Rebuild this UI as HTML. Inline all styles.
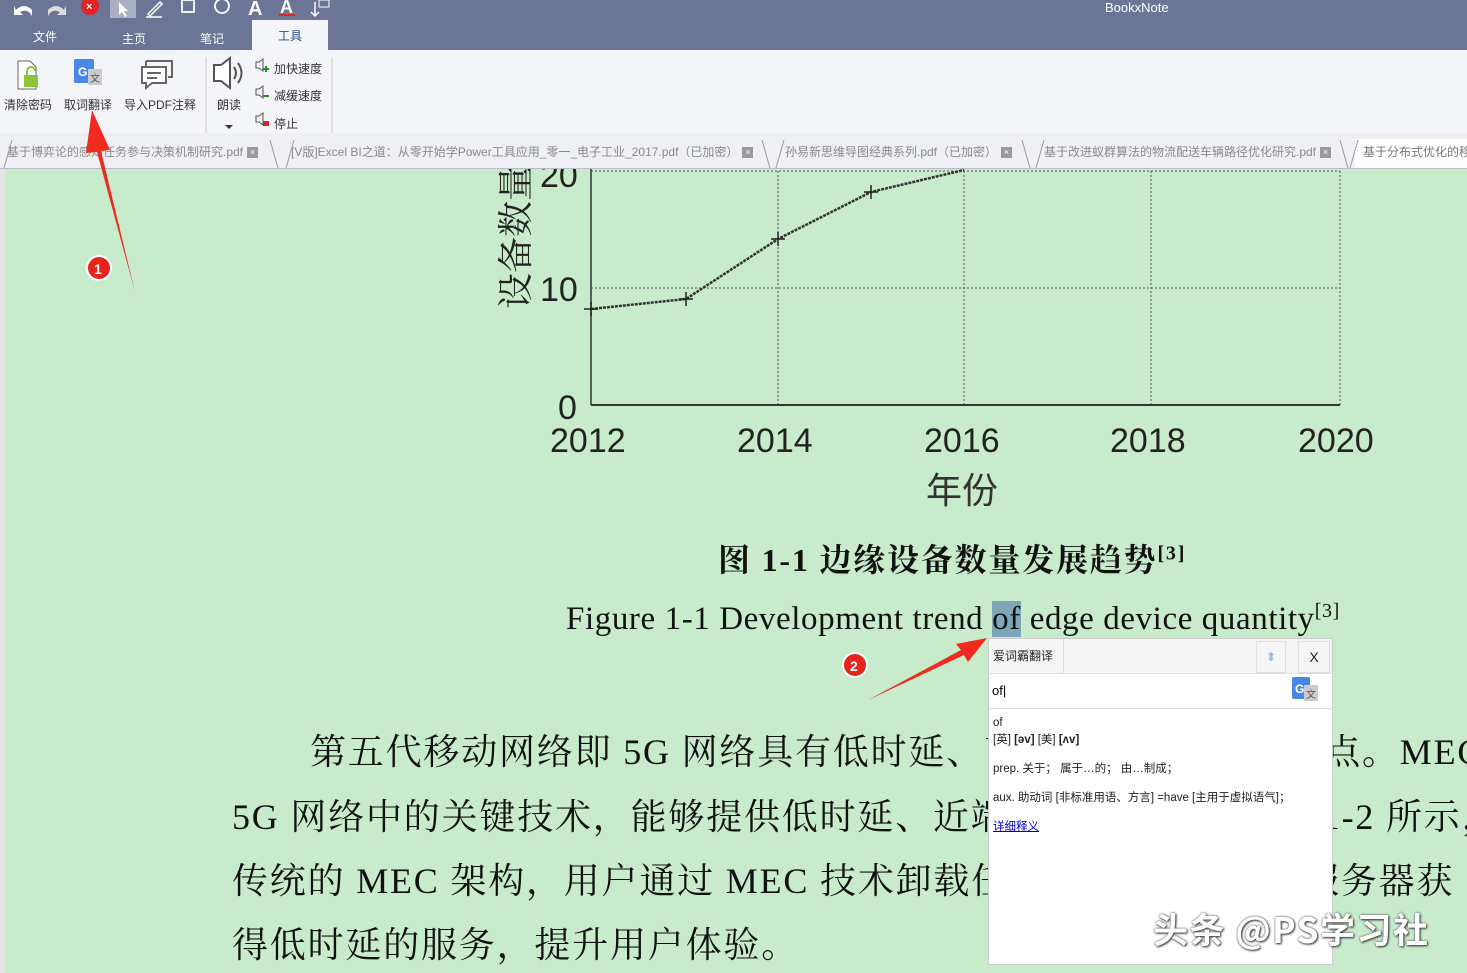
<!DOCTYPE html>
<html><head><meta charset="utf-8"><style>
body{margin:0;width:1467px;height:973px;overflow:hidden;position:relative;background:#c8ebcc;font-family:"Liberation Sans","Noto Sans CJK SC",sans-serif}
.abs{position:absolute}
.top{left:0;top:0;width:1467px;height:50px;background:#6c7596}
.rib{left:0;top:50px;width:1467px;height:83px;background:#f4f5f8}
.tabs{left:0;top:133px;width:1467px;height:35px;background:#eef0f3;border-bottom:1px solid #b9bcc4}
.menu{color:#fff;font-size:12px;top:28px}
.lbl{font-size:12px;color:#333;top:96px}
.tab{top:139px;height:29px;font-size:12px;color:#8a8a8a;line-height:27px;white-space:nowrap}
.x{display:inline-block;width:11px;height:11px;background:#9a9a9a;color:#fff;font-size:9px;line-height:11px;text-align:center;vertical-align:middle;margin-left:4px}
.serif{font-family:"Liberation Serif","Noto Serif CJK SC",serif;color:#111}
.body{font-size:36px;left:232px;white-space:nowrap;letter-spacing:1.8px}
</style></head><body>
<div class="abs top"></div>
<div class="abs" style="left:1105px;top:0;color:#fff;font-size:13px">BookxNote</div>
<svg class="abs" style="left:0;top:0" width="340" height="20">
<path d="M16 10 q8-8 16 0 l0 6 q-4-8-12-4 l3 3 -9 0 0-9z" fill="#fff"/>
<path d="M64 10 q-8-8-16 0 l0 6 q4-8 12-4 l-3 3 9 0 0-9z" fill="#ddd"/>
<circle cx="90" cy="6" r="9" fill="#e02424"/><text x="86" y="10" fill="#fff" font-size="11" font-weight="bold">×</text>
<rect x="110" y="0" width="26" height="18" fill="#aab0c4"/><path d="M119 2 l0 13 3-3 3 5 2-1-3-5 4 0z" fill="#fff"/>
<path d="M148 14 l12-12 2 2-12 12z M146 17 h16" stroke="#fff" fill="none" stroke-width="1.5"/>
<rect x="182" y="0" width="12" height="12" fill="none" stroke="#fff" stroke-width="1.8"/>
<circle cx="222" cy="6" r="7" fill="none" stroke="#fff" stroke-width="1.8"/>
<text x="248" y="15" fill="#fff" font-size="20" font-weight="bold">A</text>
<text x="280" y="13" fill="#fff" font-size="18" font-weight="bold">A</text><rect x="279" y="14" width="16" height="2" fill="#e02424"/>
<path d="M315 2 v14 M311 12 l4 4 4-4" stroke="#fff" fill="none" stroke-width="1.5"/><rect x="319" y="0" width="10" height="7" fill="none" stroke="#fff"/>
</svg>
<div class="abs menu" style="left:33px">文件</div>
<div class="abs menu" style="left:122px;top:30px">主页</div>
<div class="abs menu" style="left:200px;top:30px">笔记</div>
<div class="abs" style="left:252px;top:20px;width:76px;height:30px;background:#f4f5f8;color:#2a4a8a;font-size:12px;text-align:center;line-height:32px">工具</div>
<div class="abs rib"></div>
<svg class="abs" style="left:0;top:55px" width="340" height="80">
<path d="M18 6 h12 l6 6 v22 h-18z" fill="#fff" stroke="#666"/>
<rect x="24" y="20" width="14" height="12" fill="#8cc43c"/><path d="M27 20 v-4 a4 4 0 0 1 8 0" fill="none" stroke="#8cc43c" stroke-width="2"/>
<rect x="74" y="4" width="20" height="24" rx="2" fill="#4a86e8"/><text x="78" y="21" fill="#fff" font-size="12" font-weight="bold">G</text>
<rect x="88" y="14" width="14" height="16" fill="#ccc"/><text x="90" y="27" fill="#555" font-size="10">文</text>
<path d="M146 6 h26 v16 h-4 M146 6 v14" fill="none" stroke="#666" stroke-width="2"/>
<path d="M142 12 h24 v16 h-14 l-6 5 v-5 h-4z" fill="#fff" stroke="#666" stroke-width="2"/><path d="M147 18 h14 M147 23 h10" stroke="#666" stroke-width="2"/>
<path d="M214 10 h7 l9-7 v30 l-9-7 h-7z" fill="#fff" stroke="#555" stroke-width="2"/>
<path d="M234 12 q4 6 0 12 M238 8 q7 10 0 20" fill="none" stroke="#555" stroke-width="2"/>
<path d="M225 70 l4 4 4-4z" fill="#333"/>
<line x1="206" y1="2" x2="206" y2="78" stroke="#ccc"/><line x1="332" y1="2" x2="332" y2="78" stroke="#ccc"/>
<g fill="none" stroke="#555"><path d="M256 7 h3 l4-3 v12 l-4-3 h-3z"/><path d="M256 34 h3 l4-3 v12 l-4-3 h-3z"/><path d="M256 61 h3 l4-3 v12 l-4-3 h-3z"/></g>
<path d="M263 14 h6 M266 11 v6" stroke="#2a8a2a" stroke-width="2"/><path d="M263 41 h6" stroke="#2a8a2a" stroke-width="2"/><rect x="263" y="66" width="6" height="5" fill="#e02020"/>
</svg>
<div class="abs lbl" style="left:4px">清除密码</div>
<div class="abs lbl" style="left:64px">取词翻译</div>
<div class="abs lbl" style="left:124px">导入PDF注释</div>
<div class="abs lbl" style="left:217px">朗读</div>
<div class="abs" style="left:274px;top:60px;font-size:12px;color:#333">加快速度</div>
<div class="abs" style="left:274px;top:87px;font-size:12px;color:#333">减缓速度</div>
<div class="abs" style="left:274px;top:115px;font-size:12px;color:#333">停止</div>
<div class="abs tabs"></div>
<div class="abs tab" style="left:7px">基于博弈论的感知任务参与决策机制研究.pdf<span class="x">×</span></div>
<div class="abs tab" style="left:291px">[V版]Excel BI之道：从零开始学Power工具应用_零一_电子工业_2017.pdf（已加密）<span class="x">×</span></div>
<div class="abs tab" style="left:785px">孙易新思维导图经典系列.pdf（已加密）<span class="x">×</span></div>
<div class="abs tab" style="left:1044px">基于改进蚁群算法的物流配送车辆路径优化研究.pdf<span class="x">×</span></div>
<div class="abs tab" style="left:1355px;background:#fff;width:120px;color:#777;padding-left:8px">基于分布式优化的移</div>
<svg class="abs" style="left:0;top:136px" width="1467" height="33"><g stroke="#999" fill="none"><path d="M4 32 L12 4 M270 4 L278 32 M286 32 L294 4 M762 4 L770 32 M776 32 L784 4 M1022 4 L1030 32 M1036 32 L1044 4 M1340 4 L1348 32 M1350 32 L1358 4"/></g></svg>
<div class="abs" style="left:0;top:169px;width:6px;height:804px;background:#e4e4e4"></div>
<svg class="abs" style="left:480px;top:169px" width="920" height="350">
<g stroke="#555" stroke-dasharray="2 2" stroke-width="1"><line x1="111" y1="2" x2="860" y2="2"/><line x1="111" y1="119" x2="860" y2="119"/><line x1="298" y1="2" x2="298" y2="236"/><line x1="484" y1="2" x2="484" y2="236"/><line x1="671" y1="2" x2="671" y2="236"/><line x1="860" y1="2" x2="860" y2="236"/></g>
<line x1="111" y1="0" x2="111" y2="236" stroke="#333" stroke-width="1.5"/><line x1="111" y1="236" x2="860" y2="236" stroke="#333" stroke-width="2"/>
<polyline points="111,140 206,130 298,70 391,23 484,1" fill="none" stroke="#333" stroke-width="2.5" stroke-dasharray="3 1"/>
<g stroke="#222" stroke-width="1.5"><path d="M111 133v14M104 140h14M206 123v14M199 130h14M298 63v14M291 70h14M391 16v14M384 23h14"/></g>
<g font-family="Liberation Sans,sans-serif" font-size="34" fill="#222"><text x="60" y="18">20</text><text x="60" y="132">10</text><text x="78" y="250">0</text>
<text x="70" y="283">2012</text><text x="257" y="283">2014</text><text x="444" y="283">2016</text><text x="630" y="283">2018</text><text x="818" y="283">2020</text></g>
<text x="446" y="334" font-size="36" fill="#333" font-family="Noto Sans CJK SC,sans-serif">年份</text>
<text transform="translate(48,140) rotate(-90)" font-size="36" fill="#222" font-family="Noto Serif CJK SC,serif">设备数量</text>
</svg>
<div class="abs serif" style="left:718px;top:535px;font-size:32px;font-weight:bold;letter-spacing:1.8px">图 1-1 边缘设备数量发展趋势<sup style="font-size:20px">[3]</sup></div>
<div class="abs serif" style="left:566px;top:600px;font-size:33px;letter-spacing:0.6px">Figure 1-1 Development trend <span style="background:#7fa6b8">of</span> edge device quantity<sup style="font-size:20px">[3]</sup></div>
<div class="abs serif body" style="left:310px;top:724px">第五代移动网络即 5G 网络具有低时延、高带宽、大连接等特点。MEC 是</div>
<div class="abs serif body" style="top:789px">5G 网络中的关键技术，能够提供低时延、近端计算等服务，如图 1-2 所示，</div>
<div class="abs serif body" style="top:853px">传统的 MEC 架构，用户通过 MEC 技术卸载任务到边缘的 MEC 服务器获</div>
<div class="abs serif body" style="top:917px">得低时延的服务，提升用户体验。</div>
<svg class="abs" style="left:0;top:0" width="1467" height="973">
<path d="M92 110 L110 150 L101 151 L135 292 L97 152 L86 153z" fill="#f02a1e"/>
<path d="M987 638 L956 644 L961 650 L868 700 L964 655 L968 662z" fill="#f02a1e"/>
<circle cx="99" cy="268" r="12" fill="#e8231c" stroke="#fff" stroke-width="2"/><text x="94" y="274" fill="#fff" font-size="14" font-weight="bold">1</text>
<circle cx="855" cy="665" r="12" fill="#e8231c" stroke="#fff" stroke-width="2"/><text x="850" y="671" fill="#fff" font-size="14" font-weight="bold">2</text>
</svg>
<div class="abs" style="left:988px;top:638px;width:345px;height:327px;background:#fff;border:1px solid #ccc;box-sizing:border-box">
<div style="height:34px;background:#f5f5f5;border-bottom:1px solid #ddd;position:relative;font-size:12px;color:#222">
<div style="position:absolute;left:0;top:0;width:70px;height:34px;border-right:1px solid #ddd;line-height:34px;padding-left:4px">爱词霸翻译</div>
<div style="position:absolute;right:46px;top:2px;width:28px;height:30px;border:1px solid #e0e0e0;text-align:center;line-height:30px;color:#9bd">⬍</div>
<div style="position:absolute;right:2px;top:2px;width:30px;height:30px;border:1px solid #e0e0e0;text-align:center;line-height:30px;font-size:14px">X</div></div>
<div style="height:34px;border-bottom:1px solid #ddd;position:relative;font-size:13px;line-height:34px;padding-left:3px">of|
<svg style="position:absolute;right:10px;top:3px" width="30" height="30"><rect x="0" y="0" width="18" height="22" rx="2" fill="#4a86e8"/><text x="3" y="16" fill="#fff" font-size="12" font-weight="bold">G</text><rect x="12" y="8" width="14" height="16" fill="#ccc"/><text x="14" y="21" fill="#555" font-size="10">文</text></svg></div>
<div style="padding:6px 4px;font-size:11.5px;color:#222;line-height:17px">of<br>[英] <b>[əv]</b> [美] <b>[ʌv]</b><div style="margin-top:12px">prep. 关于；&nbsp;属于…的；&nbsp;由…制成；</div><div style="margin-top:12px">aux. 助动词 [非标准用语、方言] =have [主用于虚拟语气]；</div><div style="margin-top:12px;color:#00c;text-decoration:underline">详细释义</div></div>
</div>
<div class="abs" style="left:1153px;top:903px;font-size:35px;letter-spacing:1.5px;color:#fff;font-weight:bold;text-shadow:0 0 2px #444,1px 1px 2px #333;font-family:'Noto Sans CJK SC',sans-serif">头条 @PS学习社</div>
</body></html>
